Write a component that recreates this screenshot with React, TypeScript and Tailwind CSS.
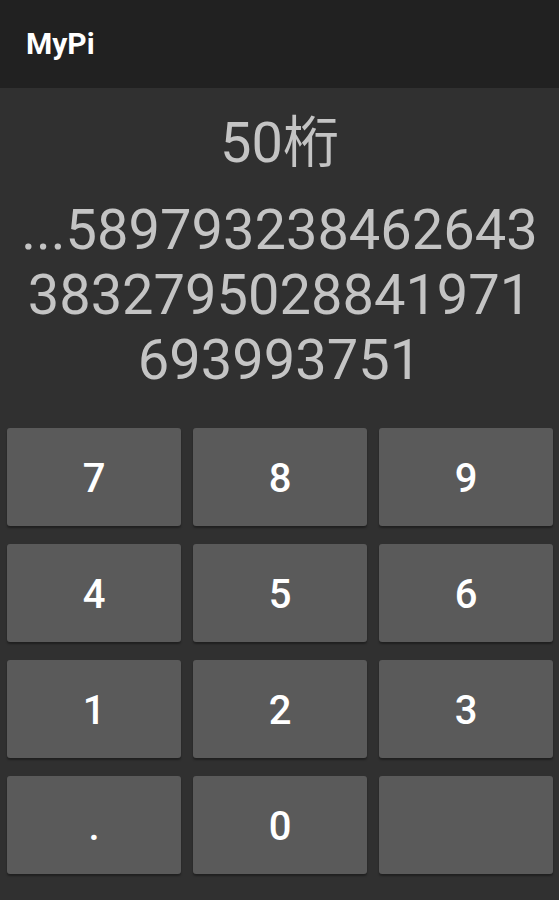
import React from 'react';

const keys = ['7', '8', '9', '4', '5', '6', '1', '2', '3', '.', '0', ''];

const digitLines = ['...589793238462643', '3832795028841971', '693993751'];

const KeyButton: React.FC<{ label: string }> = ({ label }) => (
    <button className="h-[98px] pt-[4px] rounded-[3px] bg-[#5a5a5a] shadow-[0_2px_2px_rgba(0,0,0,0.35)] flex items-center justify-center text-white text-[40px] font-medium leading-none">
        {label}
    </button>
);

export default function App() {
    return (
        <div className="w-[559px] h-[900px] bg-[#303030] flex flex-col overflow-hidden" style={{ fontFamily: 'Roboto, "Noto Sans CJK JP", sans-serif' }}>
            <header className="h-[88px] bg-[#212121] flex items-center px-[26px] shrink-0">
                <h1 className="text-[30px] font-bold text-white leading-none">MyPi</h1>
            </header>

            <div className="pt-[23px] flex flex-col items-center text-[56px] leading-[65px] text-[#c4c4c4]">
                <p>50桁</p>
                <div className="mt-[22px] flex flex-col items-center">
                    {digitLines.map((line, i) => (
                        <p key={i}>{line}</p>
                    ))}
                </div>
            </div>

            <div className="mt-[35px] pl-[7px] pr-[6px] grid grid-cols-3 gap-x-[12px] gap-y-[18px]">
                {keys.map((k, i) => (
                    <KeyButton key={i} label={k} />
                ))}
            </div>
        </div>
    );
}
